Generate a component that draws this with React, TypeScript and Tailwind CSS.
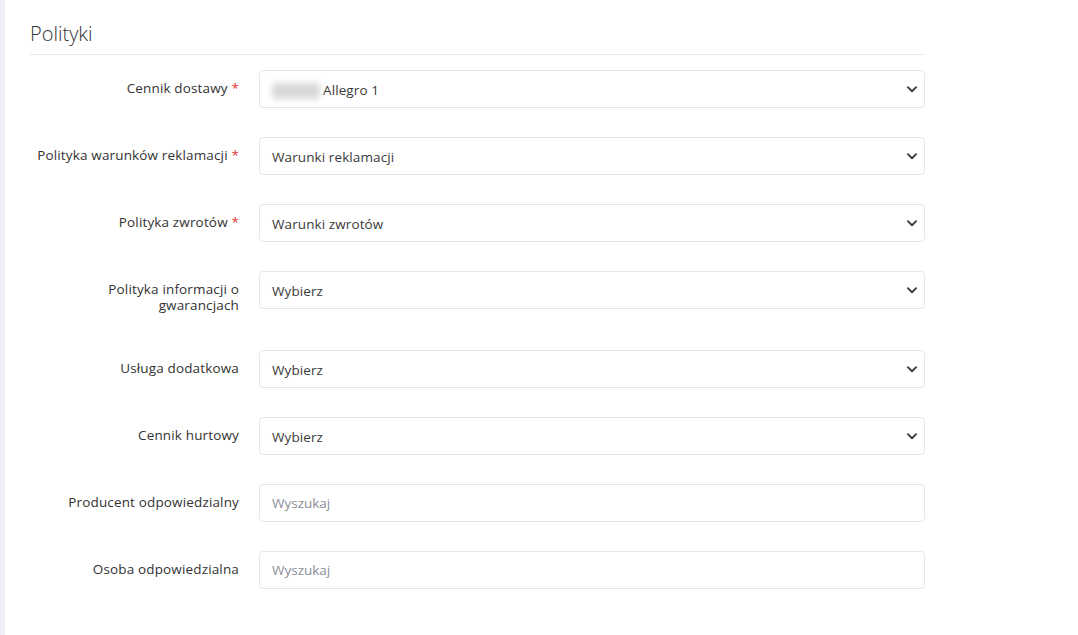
const font = { fontFamily: '"Open Sans", "Noto Sans", sans-serif' };

type Field = {
  label: string;
  required?: boolean;
  kind: "select" | "search";
  value?: string;
  blurred?: boolean;
};

const fields: Field[] = [
  { label: "Cennik dostawy", required: true, kind: "select", value: "Allegro 1", blurred: true },
  { label: "Polityka warunków reklamacji", required: true, kind: "select", value: "Warunki reklamacji" },
  { label: "Polityka zwrotów", required: true, kind: "select", value: "Warunki zwrotów" },
  { label: "Polityka informacji o gwarancjach", kind: "select", value: "Wybierz" },
  { label: "Usługa dodatkowa", kind: "select", value: "Wybierz" },
  { label: "Cennik hurtowy", kind: "select", value: "Wybierz" },
  { label: "Producent odpowiedzialny", kind: "search" },
  { label: "Osoba odpowiedzialna", kind: "search" },
];

function Chevron() {
  return (
    <svg width="12" height="12" viewBox="0 0 16 16" className="text-[#343a40]">
      <path
        d="M2.5 5.5l5.5 5.5 5.5-5.5"
        fill="none"
        stroke="currentColor"
        strokeWidth="2.4"
        strokeLinecap="round"
        strokeLinejoin="round"
      />
    </svg>
  );
}

function Row({ field }: { field: Field }) {
  return (
    <div className="flex gap-5 mb-[29px]">
      <label className="w-[209px] shrink-0 text-right text-[13.5px] tracking-[0.15px] leading-[16px] text-[#333] pt-[10px] pb-[8px]">
        {field.label}
        {field.required && <span className="text-[#e3342f]"> *</span>}
      </label>

      {field.kind === "select" ? (
        <div className="flex-1 h-[38px] flex items-center justify-between rounded border border-[#e4e5ec] bg-white pl-3 pr-[6px]">
          <div className="flex items-center pt-[3px] text-[13.5px] tracking-[0.1px] text-[#3a3a3a]">
            {field.blurred && (
              <span className="mr-[3px] inline-block w-[48px] h-[16px] rounded-sm bg-[#d9d9dc] blur-[3px]" />
            )}
            {field.value}
          </div>
          <Chevron />
        </div>
      ) : (
        <input
          placeholder="Wyszukaj"
          className="flex-1 h-[38px] rounded border border-[#e4e5ec] bg-white px-3 pt-0 text-[13.5px] text-[#3a3a3a] placeholder:text-[#8b8f99] outline-none"
          style={font}
        />
      )}
    </div>
  );
}

export default function App() {
  return (
    <div className="min-h-screen bg-white flex" style={font}>
      {/* left rail */}
      <div className="w-[5px] shrink-0 bg-[#eef0f5]" />

      <div className="flex-1 pl-[25px] pt-[21px]">
        <div className="w-[895px]">
          <h2 className="text-[20px] font-light text-[#333] leading-[26px] pb-[7px] border-b border-[#e8e9ee]">
            Polityki
          </h2>

          <div className="pt-[15px]">
            {fields.map((f) => (
              <Row key={f.label} field={f} />
            ))}
          </div>
        </div>
      </div>
    </div>
  );
}
